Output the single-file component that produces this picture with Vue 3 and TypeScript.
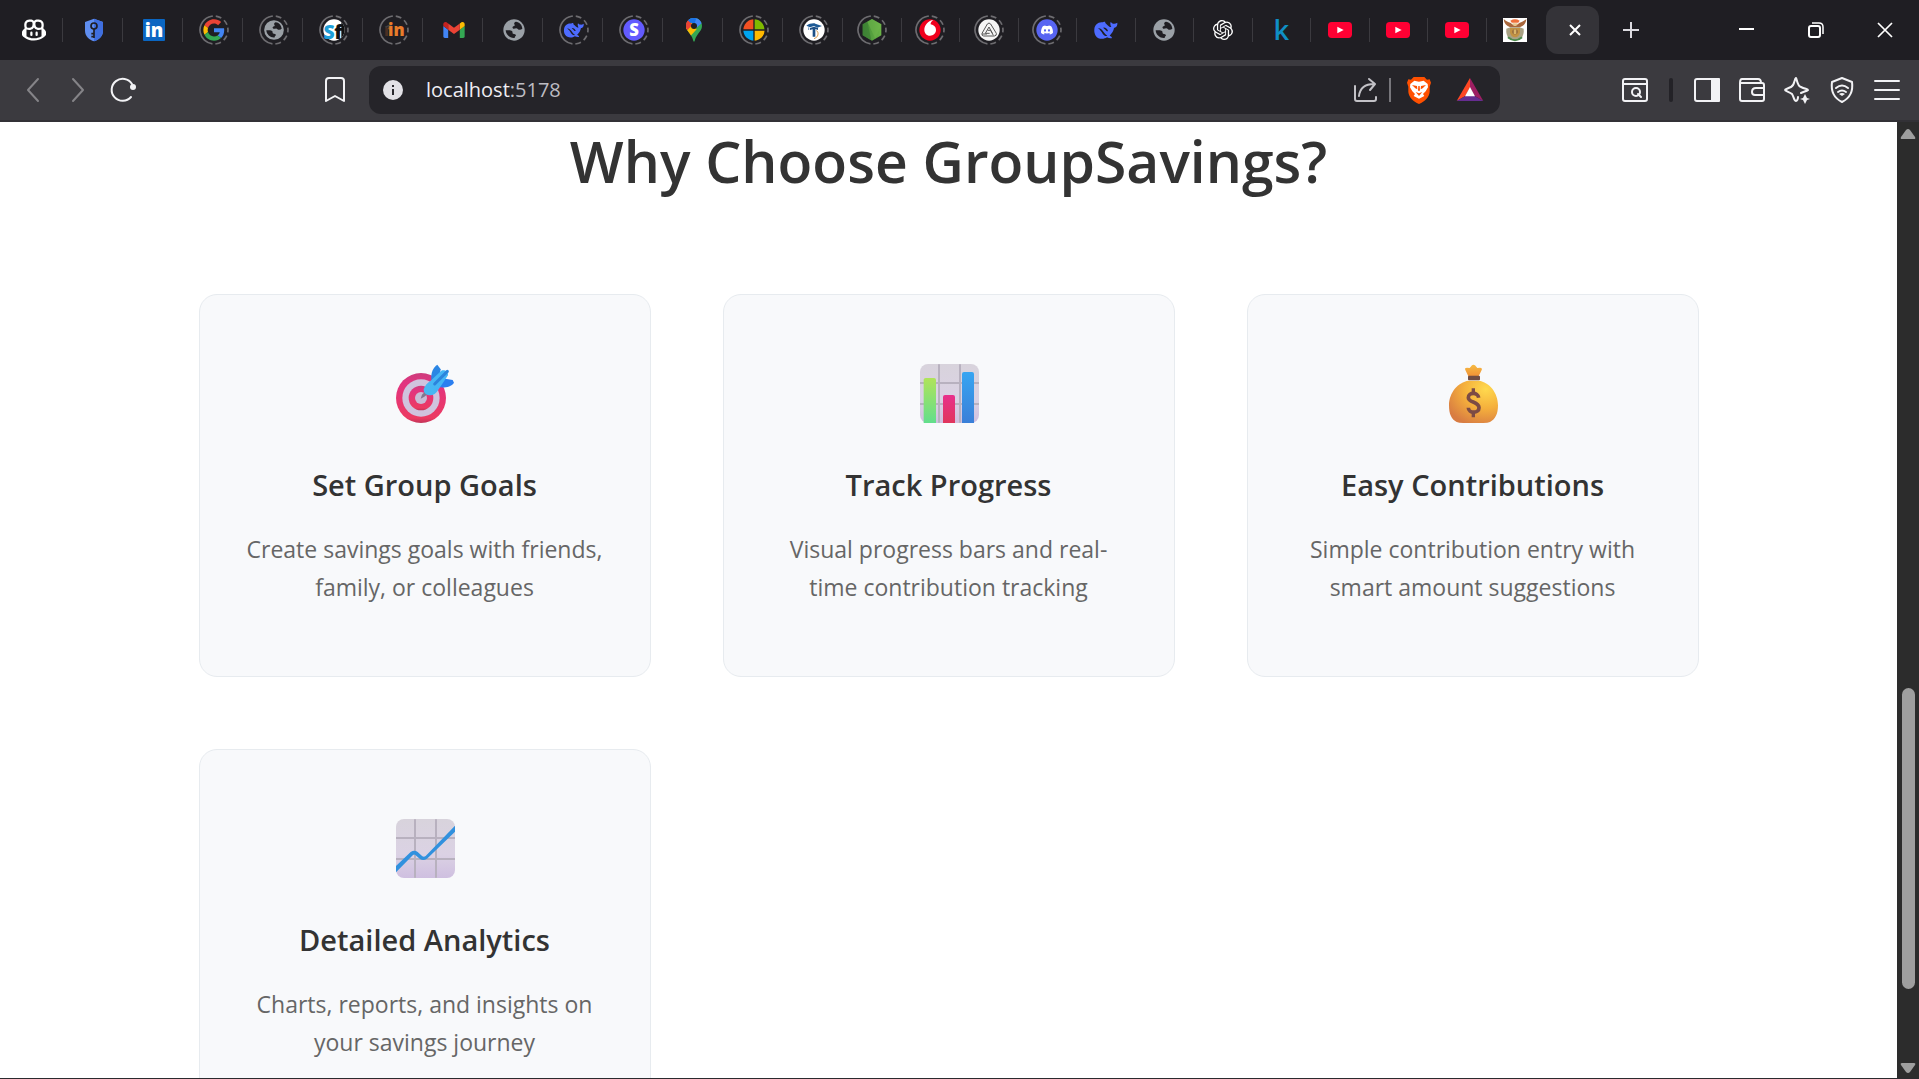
<script setup lang="ts">
interface Glyph {
  text: string
  x: number
  y: number
  size: number
  weight: number
  fill: string
}

interface Tab {
  label: string
  icon: string
  asleep?: boolean
  glyphs?: Glyph[]
}

interface Feature {
  icon: string
  title: string
  text: string
}

const wideTabs: Tab[] = [
  { label: 'Copilot', icon: 'copilot' },
  { label: 'Passwords', icon: 'shield' },
  { label: 'LinkedIn', icon: 'linkedin', glyphs: [{ text: 'in', x: 48, y: 69, size: 56, weight: 800, fill: '#fff' }] },
  { label: 'Google', icon: 'google', asleep: true },
  { label: 'Web page', icon: 'globe-small', asleep: true },
  {
    label: 'Student site',
    icon: 'sf',
    asleep: true,
    glyphs: [
      { text: 'S', x: 33, y: 76, size: 58, weight: 800, fill: '#1f9fd8' },
      { text: 'f', x: 61, y: 76, size: 60, weight: 800, fill: '#111' },
    ],
  },
  { label: 'Moodle', icon: 'moodle', asleep: true, glyphs: [{ text: 'in', x: 55, y: 66, size: 50, weight: 800, fill: '#e87c2a' }] },
  { label: 'Gmail', icon: 'gmail' },
  { label: 'Web page', icon: 'globe' },
  { label: 'DeepSeek', icon: 'whale-small', asleep: true },
  { label: 'Stripe', icon: 'stripe', asleep: true, glyphs: [{ text: 'S', x: 48, y: 66, size: 50, weight: 800, fill: '#fff' }] },
  { label: 'Maps', icon: 'maps' },
  { label: 'Microsoft', icon: 'microsoft', asleep: true },
  { label: 'Academy', icon: 'academy', asleep: true },
]

const narrowTabs: Tab[] = [
  { label: 'Node', icon: 'node', asleep: true },
  { label: 'Vodafone', icon: 'vodafone', asleep: true },
  { label: 'Triangle', icon: 'triangle', asleep: true },
  { label: 'Discord', icon: 'discord', asleep: true },
  { label: 'DeepSeek', icon: 'whale' },
  { label: 'Web page', icon: 'globe' },
  { label: 'ChatGPT', icon: 'openai' },
  { label: 'Kaggle', icon: 'blank', glyphs: [{ text: 'k', x: 49, y: 79, size: 82, weight: 600, fill: '#0f8fc4' }] },
  { label: 'YouTube', icon: 'youtube' },
  { label: 'YouTube', icon: 'youtube' },
  { label: 'YouTube', icon: 'youtube' },
  { label: 'Government', icon: 'arms' },
]

const tabGroups = [
  { name: 'wide', tabs: wideTabs },
  { name: 'narrow', tabs: narrowTabs },
]

const features: Feature[] = [
  { icon: 'target', title: 'Set Group Goals', text: 'Create savings goals with friends, family, or colleagues' },
  { icon: 'bars', title: 'Track Progress', text: 'Visual progress bars and real-time contribution tracking' },
  { icon: 'money', title: 'Easy Contributions', text: 'Simple contribution entry with smart amount suggestions' },
  { icon: 'growth', title: 'Detailed Analytics', text: 'Charts, reports, and insights on your savings journey' },
]
</script>

<template>
  <div class="browser">
    <svg class="sprite" aria-hidden="true">
      <defs>
        <clipPath id="disc"><circle cx="48" cy="48" r="32" /></clipPath>
        <clipPath id="pin-clip"><path d="M642 54C628 54 618 64 618 78C618 88 624 94 630 102C636 110 638 116 640 123Q642 128 644 123C646 116 648 110 654 102C660 94 666 88 666 78C666 64 656 54 642 54Z" /></clipPath>
        <linearGradient id="node-fill"><stop offset="0" stop-color="#3f8a35" /><stop offset="1" stop-color="#6cb548" /></linearGradient>
        <linearGradient id="tile" x1="0" y1="0" x2="0" y2="1"><stop offset="0" stop-color="#d8d3dc" /><stop offset=".6" stop-color="#dbd2e4" /><stop offset="1" stop-color="#cfbfe0" /></linearGradient>
        <linearGradient id="bar-green" x1="0" y1="0" x2="0" y2="1"><stop offset="0" stop-color="#b0e35a" /><stop offset="1" stop-color="#62de8c" /></linearGradient>
        <linearGradient id="bar-pink" x1="0" y1="0" x2="0" y2="1"><stop offset="0" stop-color="#e8308c" /><stop offset="1" stop-color="#e0355c" /></linearGradient>
        <linearGradient id="bar-blue" x1="0" y1="0" x2="0" y2="1"><stop offset="0" stop-color="#37a5f2" /><stop offset="1" stop-color="#3a7fd8" /></linearGradient>
        <linearGradient id="board" x1="0" y1="0" x2="0" y2="1"><stop offset="0" stop-color="#cc3d7c" /><stop offset=".2" stop-color="#e23480" /><stop offset=".9" stop-color="#ec3a62" /><stop offset="1" stop-color="#c03458" /></linearGradient>
        <linearGradient id="dart" x1="0" y1="0" x2="1" y2="0"><stop offset="0" stop-color="#49b8f2" /><stop offset="1" stop-color="#42b4f6" /></linearGradient>
        <radialGradient id="gold" cx=".75" cy=".2" r=".9"><stop offset="0" stop-color="#ffd94e" /><stop offset=".5" stop-color="#f5b03c" /><stop offset="1" stop-color="#d87c42" /></radialGradient>
        <linearGradient id="neck" x1="0" y1="0" x2="0" y2="1"><stop offset="0" stop-color="#f6bb42" /><stop offset="1" stop-color="#f09136" /></linearGradient>
      </defs>

      <symbol id="ring" viewBox="0 0 96 96">
        <circle cx="48" cy="48" r="42" fill="none" stroke="#6d6c70" stroke-width="5" pathLength="360" stroke-dasharray="20 14 22 14 24 12 168 12 24 14 22 14" transform="rotate(-10 48 48)" />
      </symbol>

      <symbol id="blank" viewBox="0 0 96 96"></symbol>

      <symbol id="copilot" viewBox="54 42 96 96">
        <g transform="translate(66 54) scale(4.5)" fill="#fff">
          <path d="M7.998 15.035c-4.562 0-7.873-2.914-7.998-3.749V9.338c.085-.628.677-1.686 1.588-2.065.013-.07.024-.143.036-.218.029-.183.06-.384.126-.612-.201-.508-.254-1.084-.254-1.656 0-.87.128-1.769.693-2.484.579-.733 1.494-1.124 2.724-1.261 1.206-.134 2.262.034 2.944.765.05.053.096.108.139.165.044-.057.094-.112.143-.165.682-.731 1.738-.899 2.944-.765 1.23.137 2.145.528 2.724 1.261.566.715.693 1.614.693 2.484 0 .572-.053 1.148-.254 1.656.066.228.098.429.126.612.012.076.024.148.037.218.924.385 1.522 1.471 1.591 2.095v1.872c0 .766-3.351 3.795-8.002 3.795Zm0-1.485c2.28 0 4.584-1.11 5.002-1.433V7.862l-.023-.116c-.49.21-1.075.291-1.727.291-1.146 0-2.059-.327-2.71-.991A3.222 3.222 0 0 1 8 6.303a3.24 3.24 0 0 1-.544.743c-.65.664-1.563.991-2.71.991-.652 0-1.236-.081-1.727-.291l-.023.116v4.255c.419.323 2.722 1.433 5.002 1.433ZM6.762 2.83c-.193-.206-.637-.413-1.682-.297-1.019.113-1.479.404-1.713.7-.247.312-.369.789-.369 1.554 0 .793.129 1.171.308 1.371.162.181.519.379 1.442.379.853 0 1.339-.235 1.638-.54.315-.322.527-.827.617-1.553.117-.935-.037-1.395-.241-1.614Zm4.155-.297c-1.044-.116-1.488.091-1.681.297-.204.219-.359.679-.242 1.614.091.726.303 1.231.618 1.553.299.305.784.54 1.638.54.922 0 1.28-.198 1.442-.379.179-.2.308-.578.308-1.371 0-.765-.123-1.242-.37-1.554-.233-.296-.693-.587-1.713-.7Z" />
          <path d="M6.25 9.037a.75.75 0 0 1 .75.75v1.501a.75.75 0 0 1-1.5 0V9.787a.75.75 0 0 1 .75-.75Zm4.25.75v1.501a.75.75 0 0 1-1.5 0V9.787a.75.75 0 0 1 1.5 0Z" />
        </g>
      </symbol>

      <symbol id="shield" viewBox="234 42 96 96">
        <path d="M282 56 309 66V92C309 108 297 119 282 124C267 119 255 108 255 92V66Z" fill="#5f8ef0" />
        <path d="M282 56 309 66V92C309 108 297 119 282 124Z" fill="#3f6fe0" />
        <circle cx="282" cy="78" r="9" fill="none" stroke="#1f1e23" stroke-width="5" />
        <path d="M282 87V114M282 101H274M282 110H274" fill="none" stroke="#1f1e23" stroke-width="5" />
      </symbol>

      <symbol id="linkedin" viewBox="414 42 96 96">
        <rect x="429" y="57" width="66" height="66" rx="3" fill="#0a66c2" />
      </symbol>

      <symbol id="google" viewBox="596 42 96 96">
        <g transform="translate(612 58) scale(1.333)">
          <path fill="#ea4335" d="M24 9.5c3.54 0 6.71 1.22 9.21 3.6l6.85-6.85C35.9 2.38 30.47 0 24 0 14.62 0 6.51 5.38 2.56 13.22l7.98 6.19C12.43 13.72 17.74 9.5 24 9.5z" />
          <path fill="#4285f4" d="M46.98 24.55c0-1.57-.15-3.09-.38-4.55H24v9.02h12.94c-.58 2.96-2.26 5.48-4.78 7.18l7.73 6c4.51-4.18 7.09-10.36 7.09-17.65z" />
          <path fill="#fbbc05" d="M10.53 28.59c-.48-1.45-.76-2.99-.76-4.59s.27-3.14.76-4.59l-7.98-6.19C.92 16.46 0 20.12 0 24c0 3.88.92 7.54 2.56 10.78l7.97-6.19z" />
          <path fill="#34a853" d="M24 48c6.48 0 11.93-2.13 15.89-5.81l-7.73-6c-2.15 1.45-4.92 2.3-8.16 2.3-6.26 0-11.57-4.22-13.47-9.91l-7.98 6.19C6.51 42.62 14.62 48 24 48z" />
        </g>
      </symbol>

      <symbol id="globe" viewBox="0 0 96 96">
        <circle cx="48" cy="48" r="32" fill="#9aa0a6" />
        <path d="M54 23C64 24 72 32 73 44C70 47 66 48 62 47C59 46 58 43 55 43C51 43 49 45 46 44C42 42 43 38 46 37C50 36 52 34 49 31C47 27 50 24 54 23Z" fill="#1f1e23" />
        <path d="M23 49C28 49 38 47 42 51C45 54 42 57 45 59C49 61 54 60 54 64C54 67 50 67 50 72C38 74 24 64 23 49Z" fill="#1f1e23" />
      </symbol>
      <symbol id="globe-small" viewBox="-4 -4 104 104"><use href="#globe" x="0" y="0" width="96" height="96" /></symbol>

      <symbol id="sf" viewBox="0 0 96 96">
        <g clip-path="url(#disc)">
          <rect width="96" height="96" fill="#fff" />
          <rect x="70" width="30" height="96" fill="#111" />
        </g>
      </symbol>

      <symbol id="moodle" viewBox="0 0 96 96">
        <path d="M20 38 36 31 44 34 24 42Z" fill="#45403f" />
        <path d="M22 42H30V66H22Z" fill="#4a3024" />
        <path d="M30 40H38V46H30Z" fill="#70422a" />
      </symbol>

      <symbol id="gmail" viewBox="1314 42 96 96">
        <g transform="translate(1330 66) scale(.727) translate(-52 -42)">
          <path fill="#4285f4" d="M58 108h14V74L52 59v43c0 3.32 2.69 6 6 6" />
          <path fill="#34a853" d="M120 108h14c3.32 0 6-2.69 6-6V59l-20 15" />
          <path fill="#fbbc04" d="M120 48v26l20-15v-8c0-7.42-8.47-11.65-14.4-7.2" />
          <path fill="#ea4335" d="M72 74V48l24 18 24-18v26L96 92" />
          <path fill="#c5221f" d="M52 51v8l20 15V48l-5.6-4.2c-5.94-4.45-14.4-.22-14.4 7.2" />
        </g>
      </symbol>

      <symbol id="whale" viewBox="388 42 96 96">
        <path fill="#4d6bfe" d="M401 88C402 75 412 66 424 67C429 67 430 64 434 66C432 69 436 71 440 75C444 79 448 82 452 81C449 76 448 70 450 66C453 68 454 71 458 71C462 72 466 70 470 68C471 76 468 82 460 84C459 92 454 100 447 107C451 109 454 111 454 114C450 116 444 114 439 112C429 119 412 118 405 107C402 102 400 95 401 88Z" />
        <path fill="#1f1e23" d="M412 85C419 84 424 89 429 96C433 102 436 105 440 107C436 110 430 106 426 101C422 95 418 89 412 85Z" />
        <path fill="#1f1e23" d="M428 83C434 82 440 87 442 93C440 95 436 92 434 89C432 87 430 86 428 83Z" />
      </symbol>
      <symbol id="whale-small" viewBox="-8 -8 112 112"><use href="#whale" x="0" y="0" width="96" height="96" /></symbol>

      <symbol id="stripe" viewBox="0 0 96 96">
        <circle cx="48" cy="48" r="32" fill="#635bff" />
      </symbol>

      <symbol id="maps" viewBox="594 42 96 96">
        <g clip-path="url(#pin-clip)">
          <rect x="610" y="50" width="64" height="84" fill="#34a853" />
          <path d="M610 50H674V62L642 90 624 66Z" fill="#4285f4" />
          <path d="M610 50 626 58 646 78 630 88 618 90 610 84Z" fill="#ea4335" />
          <path d="M626 50H650L642 78 624 62Z" fill="#1a73e8" />
          <path d="M614 90 634 68 650 88 628 112Z" fill="#fbbc04" />
          <path d="M610 60 624 62 638 74 620 92H610Z" fill="#ea4335" />
        </g>
        <circle cx="642" cy="78" r="9" fill="#1f1e23" />
      </symbol>

      <symbol id="microsoft" viewBox="0 0 96 96">
        <g clip-path="url(#disc)">
          <path d="M0 0H46V46H0Z" fill="#f25022" /><path d="M50 0H96V46H50Z" fill="#7fba00" />
          <path d="M0 50H46V96H0Z" fill="#00a4ef" /><path d="M50 50H96V96H50Z" fill="#ffb900" />
        </g>
      </symbol>

      <symbol id="academy" viewBox="0 0 96 96">
        <circle cx="48" cy="48" r="32" fill="#fff" />
        <path d="M25 35C34 28 48 27 52 29L72 36 58 41 48 36 36 40Z" fill="#1d5a96" />
        <path d="M36 42 48 38 60 42V48L52 45V68H44V46L36 48Z" fill="#1d4f86" />
        <path d="M55 50C62 52 62 66 54 71L48 74" fill="none" stroke="#d99a4e" stroke-width="3" />
        <path d="M32 40V48" stroke="#1d5a96" stroke-width="2" />
      </symbol>

      <symbol id="node" viewBox="0 0 96 96">
        <path d="M48 15 76 31V64L48 80 20 64V31Z" fill="url(#node-fill)" />
        <path d="M20 31 34 23 46 79 20 64Z" fill="#3a7c33" opacity=".6" />
        <path d="M34 23 48 15 76 31 58 74Z" fill="#6fb84c" opacity=".5" />
      </symbol>

      <symbol id="vodafone" viewBox="0 0 96 96">
        <circle cx="48" cy="48" r="32" fill="#f0001c" />
        <path d="M58 18C52 22 49 27 50 31C60 33 66 39 66 48C66 58 58 65 48 65C37 65 31 57 31 47C31 33 44 19 58 18Z" fill="#fff" />
      </symbol>

      <symbol id="triangle" viewBox="0 0 96 96">
        <circle cx="48" cy="48" r="32" fill="#f5f5f5" />
        <path d="M43 30Q48 24 53 30L70 58Q72 65 64 66H32Q25 65 27 58ZM48 39 37 58H50M48 39 58 58M44 49H53L61 64M27 60H42" fill="none" stroke="#565656" stroke-width="3" />
      </symbol>

      <symbol id="discord" viewBox="0 0 96 96">
        <circle cx="48" cy="48" r="32" fill="#5865f2" />
        <path transform="translate(30 30) scale(1.5)" fill="#fff" d="M20.317 4.3698a19.7913 19.7913 0 00-4.8851-1.5152.0741.0741 0 00-.0785.0371c-.211.3753-.4447.8648-.6083 1.2495-1.8447-.2762-3.68-.2762-5.4868 0-.1636-.3933-.4058-.8742-.6177-1.2495a.077.077 0 00-.0785-.037 19.7363 19.7363 0 00-4.8852 1.515.0699.0699 0 00-.0321.0277C.5334 9.0458-.319 13.5799.0992 18.0578a.0824.0824 0 00.0312.0561c2.0528 1.5076 4.0413 2.4228 5.9929 3.0294a.0777.0777 0 00.0842-.0276c.4616-.6304.8731-1.2952 1.226-1.9942a.076.076 0 00-.0416-.1057c-.6528-.2476-1.2743-.5495-1.8722-.8923a.077.077 0 01-.0076-.1277c.1258-.0943.2517-.1923.3718-.2914a.0743.0743 0 01.0776-.0105c3.9278 1.7933 8.18 1.7933 12.0614 0a.0739.0739 0 01.0785.0095c.1202.099.246.1981.3728.2924a.077.077 0 01-.0066.1276 12.2986 12.2986 0 01-1.873.8914.0766.0766 0 00-.0407.1067c.3604.698.7719 1.3628 1.225 1.9932a.076.076 0 00.0842.0286c1.961-.6067 3.9495-1.5219 6.0023-3.0294a.077.077 0 00.0313-.0552c.5004-5.177-.8382-9.6739-3.5485-13.6604a.061.061 0 00-.0312-.0286zM8.02 15.3312c-1.1825 0-2.1569-1.0857-2.1569-2.419 0-1.3332.9555-2.4189 2.157-2.4189 1.2108 0 2.1757 1.0952 2.1568 2.419 0 1.3332-.9555 2.4189-2.1569 2.4189zm7.9748 0c-1.1825 0-2.1569-1.0857-2.1569-2.419 0-1.3332.9554-2.4189 2.1569-2.4189 1.2108 0 2.1757 1.0952 2.1568 2.419 0 1.3332-.946 2.4189-2.1568 2.4189Z" />
      </symbol>

      <symbol id="openai" viewBox="0 0 96 96">
        <path transform="translate(18 18) scale(2.5)" fill="#fff" d="M22.2819 9.8211a5.9847 5.9847 0 0 0-.5157-4.9108 6.0462 6.0462 0 0 0-6.5098-2.9A6.0651 6.0651 0 0 0 4.9807 4.1818a5.9847 5.9847 0 0 0-3.9977 2.9 6.0462 6.0462 0 0 0 .7427 7.0966 5.98 5.98 0 0 0 .511 4.9107 6.051 6.051 0 0 0 6.5146 2.9001A5.9847 5.9847 0 0 0 13.2599 24a6.0557 6.0557 0 0 0 5.7718-4.2058 5.9894 5.9894 0 0 0 3.9977-2.9001 6.0557 6.0557 0 0 0-.7475-7.0729zm-9.022 12.6081a4.4755 4.4755 0 0 1-2.8764-1.0408l.1419-.0804 4.7783-2.7582a.7948.7948 0 0 0 .3927-.6813v-6.7369l2.02 1.1686a.071.071 0 0 1 .038.052v5.5826a4.504 4.504 0 0 1-4.4945 4.4944zm-9.6607-4.1254a4.4708 4.4708 0 0 1-.5346-3.0137l.142.0852 4.783 2.7582a.7712.7712 0 0 0 .7806 0l5.8428-3.3685v2.3324a.0804.0804 0 0 1-.0332.0615L9.74 19.9502a4.4992 4.4992 0 0 1-6.1408-1.6464zM2.3408 7.8956a4.485 4.485 0 0 1 2.3655-1.9728V11.6a.7664.7664 0 0 0 .3879.6765l5.8144 3.3543-2.0201 1.1685a.0757.0757 0 0 1-.071 0l-4.8303-2.7865A4.504 4.504 0 0 1 2.3408 7.872zm16.5963 3.8558L13.1038 8.364 15.1192 7.2a.0757.0757 0 0 1 .071 0l4.8303 2.7913a4.4944 4.4944 0 0 1-.6765 8.1042v-5.6772a.79.79 0 0 0-.407-.667zm2.0107-3.0231l-.142-.0852-4.7735-2.7818a.7759.7759 0 0 0-.7854 0L9.409 9.2297V6.8974a.0662.0662 0 0 1 .0284-.0615l4.8303-2.7866a4.4992 4.4992 0 0 1 6.6802 4.66zM8.3065 12.863l-2.02-1.1638a.0804.0804 0 0 1-.038-.0567V6.0742a4.4992 4.4992 0 0 1 7.3757-3.4537l-.142.0805L8.704 5.459a.7948.7948 0 0 0-.3927.6813zm1.0976-2.3654l2.602-1.4998 2.6069 1.4998v2.9994l-2.5974 1.4997-2.6067-1.4997Z" />
      </symbol>

      <symbol id="youtube" viewBox="0 0 96 96">
        <rect x="12" y="24" width="72" height="48" rx="11" fill="#ff0033" />
        <path d="M40 38 59 48 40 58Z" fill="#fff" />
      </symbol>

      <symbol id="arms" viewBox="0 0 96 96">
        <rect x="12" y="12" width="72" height="72" fill="#fff" />
        <path d="M14 15C15 28 22 36 34 40L62 40C74 36 81 28 82 15C75 22 68 25 62 26L54 32H42L34 26C28 25 21 22 14 15Z" fill="#a9673c" />
        <path d="M34 20Q48 12 62 20L58 26H38Z" fill="#f0703a" />
        <path d="M40 28H56L52 36H44Z" fill="#e8c58a" />
        <path d="M22 44Q20 62 30 74Q48 84 66 74Q76 62 74 44L62 40H34Z" fill="#a9a184" />
        <path d="M33 42H63V56Q60 68 48 70Q36 68 33 56Z" fill="#c29243" />
        <circle cx="48" cy="53" r="8" fill="#8a6038" />
        <path d="M44 46H52V60H44Z" fill="#d9b56a" />
        <path d="M27 70Q48 88 69 70" fill="none" stroke="#4d8a4c" stroke-width="6" />
      </symbol>

      <symbol id="target" viewBox="45 42 180 180">
        <circle cx="123" cy="144" r="75" fill="url(#board)" />
        <circle cx="123" cy="144" r="56" fill="#d0c3de" />
        <circle cx="123" cy="144" r="37" fill="url(#board)" />
        <circle cx="123" cy="144" r="18" fill="#c9bcd6" />
        <path d="M122 146 126 134 136 124 143 132 133 140Z" fill="#83768e" />
        <path d="M154 88C152 68 160 52 172 44L182 58 178 80 160 94Z" fill="#2b86e4" />
        <path d="M174 108 196 86 218 90 222 98C214 110 196 114 178 112Z" fill="#2b7ff0" />
        <path d="M131 118C134 108 142 98 152 92L184 62C192 58 206 64 204 76L176 118C168 132 158 137 148 136C136 134 131 128 131 118Z" fill="url(#dart)" />
        <path d="M164 102 202 64" stroke="#2b84dc" stroke-width="9" stroke-linecap="round" />
      </symbol>

      <symbol id="bars" viewBox="57 42 180 180">
        <rect x="60" y="42" width="177" height="177" rx="24" fill="url(#tile)" />
        <path d="M117 43V218M180 43V218M60 99H237M60 162H237" stroke="#b8b1bf" stroke-width="6" />
        <path d="M71 219V89Q71 84 77 84H102Q108 84 108 89V219Z" fill="url(#bar-green)" />
        <path d="M129 219V140Q129 135 135 135H159Q165 135 165 140V219Z" fill="url(#bar-pink)" />
        <path d="M186 219V71Q186 66 192 66H216Q222 66 222 71V219Z" fill="url(#bar-blue)" />
      </symbol>

      <symbol id="money" viewBox="39 42 180 180">
        <path d="M115 79 106 60Q103 53 111 53L119 54 126 46Q130 43 135 46L142 54 150 53Q158 54 155 60L146 79Z" fill="url(#neck)" />
        <path d="M116 92H146C178 96 204 128 204 166C204 192 196 208 180 216Q174 219 160 219H100Q86 219 80 216C64 208 57 192 57 166C57 128 84 96 116 92Z" fill="url(#gold)" />
        <rect x="114" y="77" width="36" height="14" rx="3" fill="#714d42" />
        <path d="M130 115V128M130 188V202" stroke="#7c4b45" stroke-width="10" />
        <path d="M146 143C144 126 115 126 115 143C115 158 147 154 147 173C147 192 115 190 115 173" fill="none" stroke="#7c4b45" stroke-width="11" />
      </symbol>

      <symbol id="growth" viewBox="45 57 180 180">
        <rect x="48" y="57" width="177" height="177" rx="24" fill="url(#tile)" />
        <path d="M105 58V233M168 58V233M48 114H225M48 177H225" stroke="#b8b1bf" stroke-width="6" />
        <path d="M48 198 92 156Q103 148 113 156L127 169Q132 172 137 168L225 77V95L141 176Q130 184 120 177L106 165Q103 162 99 165L48 217Z" fill="#3191de" />
      </symbol>
    </svg>

    <header class="tab-bar">
      <div v-for="group in tabGroups" :key="group.name" :class="['tab-group', group.name]">
        <button v-for="(tab, i) in group.tabs" :key="i" class="tab" type="button" :aria-label="tab.label">
          <svg class="favicon" viewBox="0 0 96 96">
            <use :href="'#' + tab.icon" />
            <text
              v-for="glyph in tab.glyphs"
              :key="glyph.text"
              :x="glyph.x"
              :y="glyph.y"
              :font-size="glyph.size"
              :font-weight="glyph.weight"
              :fill="glyph.fill"
              text-anchor="middle"
            >{{ glyph.text }}</text>
            <use v-if="tab.asleep" href="#ring" />
          </svg>
        </button>
      </div>
      <button class="active-tab" type="button" aria-label="Close tab">
        <svg width="14" height="14" viewBox="0 0 14 14"><path d="M2 2 12 12M12 2 2 12" stroke="#fff" stroke-width="2" /></svg>
      </button>
      <button class="new-tab" type="button" aria-label="New tab">
        <svg width="16" height="16" viewBox="0 0 16 16"><path d="M8 0V16M0 8H16" stroke="#dcdbe0" stroke-width="2" /></svg>
      </button>
      <div class="window-controls">
        <button type="button" aria-label="Minimize">
          <svg width="16" height="16" viewBox="0 0 16 16"><path d="M0 7H15" stroke="#fff" stroke-width="2" /></svg>
        </button>
        <button type="button" aria-label="Restore">
          <svg width="16" height="16" viewBox="0 0 16 16" fill="none" stroke="#fff" stroke-width="2"><rect x="1" y="4" width="11" height="11" rx="2" /><path d="M4 1H11Q15 1 15 5V12" stroke-width="1.5" /></svg>
        </button>
        <button type="button" aria-label="Close">
          <svg width="16" height="16" viewBox="0 0 16 16"><path d="M1 1 15 15M15 1 1 15" stroke="#fff" stroke-width="1.7" /></svg>
        </button>
      </div>
    </header>

    <nav class="toolbar">
      <button class="tool" type="button" aria-label="Back">
        <svg viewBox="0 0 30 30"><path d="M20 4 10 15 20 26" stroke="#858488" /></svg>
      </button>
      <button class="tool" type="button" aria-label="Forward">
        <svg viewBox="0 0 30 30"><path d="M10 4 20 15 10 26" stroke="#858488" /></svg>
      </button>
      <button class="tool" type="button" aria-label="Reload">
        <svg viewBox="0 0 30 30"><path d="M23 22A11 11 0 1 1 24 9" /><circle cx="25" cy="12" r="3" fill="#f2f2f5" stroke="none" /></svg>
      </button>
      <button class="tool bookmark" type="button" aria-label="Bookmark">
        <svg viewBox="0 0 30 30"><path d="M6 26V6Q6 3 9 3H21Q24 3 24 6V26L15 21Z" /></svg>
      </button>
      <div class="address">
        <svg class="info" viewBox="0 0 20 20"><circle cx="10" cy="10" r="10" fill="#e2e1e6" /><path d="M10 9V15M10 5V7" stroke="#2a292e" stroke-width="2" /></svg>
        <div class="url"><span class="host">localhost</span>:5178</div>
        <button class="share" type="button" aria-label="Share">
          <svg viewBox="0 0 30 30"><path d="M5 11V24Q5 26 7 26H24Q26 26 26 24V22M9 21C10 13 15 9 24 9M19 4 25 9 20 15" stroke="#c3c2c7" /></svg>
        </button>
        <span class="divider"></span>
        <button class="brave" type="button" aria-label="Shields">
          <svg viewBox="1334 226 84 84">
            <path d="M1360 229H1392L1400 237 1408 236 1412 246 1408 258V274C1406 290 1394 302 1376 310C1358 302 1346 290 1344 274V258L1340 246 1344 236 1352 237Z" fill="#ff5000" />
            <path d="M1362 240 1376 243 1390 240 1402 250 1403 260 1396 272 1388 280 1392 286 1376 294 1360 286 1364 280 1356 272 1349 260 1350 250Z" fill="#fff" />
            <path d="M1355 253 1370 256 1371 266 1365 263ZM1397 253 1382 256 1381 266 1387 263ZM1366 274 1376 278 1386 274 1376 286ZM1374 256H1378L1379 270H1373Z" fill="#ff5000" />
          </svg>
        </button>
        <button class="rewards" type="button" aria-label="Rewards">
          <svg viewBox="48 228 84 84">
            <path d="M90 234V262L76 288 50 303Z" fill="#ff4724" /><path d="M90 234 130 303 104 288 90 262Z" fill="#9e1f63" /><path d="M50 303 76 288H104L130 303Z" fill="#662d91" /><path d="M90 261 105 289H75Z" fill="#fff" />
          </svg>
        </button>
      </div>
      <button class="tool" type="button" aria-label="Search tabs">
        <svg viewBox="0 0 30 30"><rect x="3" y="4" width="24" height="22" rx="2" /><path d="M3 9H27M18 19 21 22" /><circle cx="16" cy="17" r="4" /></svg>
      </button>
      <span class="separator"></span>
      <button class="tool" type="button" aria-label="Sidebar">
        <svg viewBox="0 0 30 30"><rect x="3" y="4" width="24" height="22" rx="2" /><path d="M20 4H27V26H20Z" fill="#f2f2f5" /></svg>
      </button>
      <button class="tool" type="button" aria-label="Wallet">
        <svg viewBox="0 0 30 30"><path d="M3 8V24Q3 26 5 26H25Q27 26 27 24V10Q27 8 25 8H3Q3 4 5 4H21Q24 4 24 8M27 13H19Q15 13 15 17Q15 20 18 20H27" /></svg>
      </button>
      <button class="tool" type="button" aria-label="Assistant">
        <svg viewBox="0 0 30 30"><path d="M14 3C15 4 15 11 19 12C23 14 26 14 26 15C25 16 21 17 19 18M14 3C12 4 13 10 9 12C5 14 3 14 3 15C3 16 8 17 10 19C12 22 12 26 14 26C15 26 16 24 16 22" /><path d="M23 19 25 23 28 24 25 25 23 29 21 25 18 24 21 23Z" fill="#f2f2f5" stroke="none" /></svg>
      </button>
      <button class="tool" type="button" aria-label="VPN">
        <svg viewBox="0 0 30 30"><path d="M15 3 25 7Q27 21 15 27Q3 21 5 7ZM9 13Q15 8 21 13M11 17Q15 14 19 17" /><path d="M12 19Q15 17 18 19L15 21Z" fill="#f2f2f5" stroke="none" /></svg>
      </button>
      <button class="tool" type="button" aria-label="Menu">
        <svg viewBox="0 0 30 30"><path d="M3 6H27M3 15H27M3 24H27" /></svg>
      </button>
    </nav>

    <div class="viewport">
      <main class="page">
        <h2>Why Choose GroupSavings?</h2>
        <div class="features">
          <article v-for="feature in features" :key="feature.title" class="card">
            <svg class="emoji" aria-hidden="true"><use :href="'#' + feature.icon" /></svg>
            <h3>{{ feature.title }}</h3>
            <p>{{ feature.text }}</p>
          </article>
        </div>
      </main>
      <div class="scrollbar" aria-hidden="true">
        <svg class="arrow" viewBox="0 0 22 24"><path d="M4 15 9 8Q11 6 13 8L18 15Q19 17 17 17H5Q3 17 4 15Z" fill="#9f9f9f" /></svg>
        <span class="above"></span>
        <span class="thumb"></span>
        <span class="below"></span>
        <svg class="arrow" viewBox="0 0 22 24"><path d="M4 11 9 18Q11 20 13 18L18 11Q19 9 17 9H5Q3 9 4 11Z" fill="#9f9f9f" /></svg>
      </div>
    </div>
  </div>
</template>

<style>
body {
  margin: 0;
}
</style>

<style scoped>
.browser {
  display: flex;
  flex-direction: column;
  height: 100vh;
  box-sizing: border-box;
  border-bottom: 1px solid #2b2a2e;
  overflow: hidden;
  background: #fff;
  font-family: "Open Sans", "Noto Sans", sans-serif;
}

.sprite {
  position: absolute;
  width: 0;
  height: 0;
}

button {
  display: flex;
  align-items: center;
  justify-content: center;
  padding: 0;
  border: 0;
  background: none;
  flex: none;
  font-family: inherit;
}

.tab-bar {
  display: flex;
  align-items: center;
  flex: none;
  height: 60px;
  padding-left: 3px;
  background: #1f1e23;
}

.tab-group {
  display: flex;
}

.tab-group.wide {
  flex: 0 1 840px;
}

.tab-group.narrow {
  flex: 0 1 702px;
}

.tab {
  flex: 1;
  min-width: 0;
  height: 24px;
  border-right: 1px solid #3b3a3f;
}

.wide .tab {
  padding-left: 3px;
}

.narrow .tab:last-child {
  border-right-color: transparent;
}

.favicon {
  flex: none;
  width: 32px;
  height: 32px;
}

.active-tab {
  width: 53px;
  height: 48px;
  margin: 0 2px 0 1px;
  padding-left: 4px;
  border-radius: 12px;
  background: #343338;
}

.new-tab {
  width: 60px;
  height: 48px;
}

.window-controls {
  display: flex;
  margin-left: auto;
}

.window-controls button {
  width: 69px;
  height: 60px;
}

.toolbar {
  display: flex;
  align-items: center;
  flex: none;
  height: 60px;
  padding: 0 10px;
  border-bottom: 2px solid #323136;
  background: #3b3a3f;
}

.tool {
  width: 45px;
  height: 45px;
}

.tool svg,
.share svg {
  width: 30px;
  height: 30px;
  fill: none;
  stroke: #f2f2f5;
  stroke-width: 2;
  stroke-linecap: round;
  stroke-linejoin: round;
}

.bookmark {
  margin: 0 12px 0 167px;
}

.address {
  display: flex;
  align-items: center;
  flex: 1;
  min-width: 0;
  height: 48px;
  margin-right: 112px;
  padding: 0 16px 0 14px;
  box-sizing: border-box;
  border-radius: 12px;
  background: #252429;
}

.info {
  flex: none;
  width: 20px;
  height: 20px;
}

.url {
  flex: 1;
  margin-left: 23px;
  color: #bdbcc2;
  font-size: 20px;
  line-height: 28px;
}

.host {
  color: #efeef3;
}

.divider {
  width: 2px;
  height: 24px;
  margin: 0 14px 0 9px;
  background: #77767b;
}

.brave,
.rewards {
  width: 28px;
  height: 28px;
}

.rewards {
  margin-left: 23px;
}

.brave svg,
.rewards svg {
  width: 28px;
  height: 28px;
}

.separator {
  width: 4px;
  height: 24px;
  margin: 0 11px 0 12px;
  border-radius: 2px;
  background: #232227;
}

.viewport {
  display: flex;
  flex: 1;
  min-height: 0;
}

.page {
  flex: 1;
  min-width: 0;
  overflow: hidden;
}

h2 {
  margin: 0 0 94px;
  color: #333;
  font-size: 57px;
  font-weight: 600;
  line-height: 78px;
  text-align: center;
}

.features {
  display: grid;
  grid-template-columns: repeat(3, 1fr);
  gap: 72px;
  max-width: 1500px;
  margin: 0 auto;
}

.card {
  padding: 69px 45px 70px;
  border: 1px solid #e7ebef;
  border-radius: 18px;
  background: #f8f9fb;
  text-align: center;
}

.emoji {
  display: block;
  width: 60px;
  height: 60px;
  margin: 0 auto 41px;
}

h3 {
  margin: 0 0 25px;
  color: #333;
  font-size: 29px;
  font-weight: 600;
  line-height: 40px;
}

p {
  margin: 0;
  color: #666;
  font-size: 23px;
  line-height: 38px;
}

.scrollbar {
  display: flex;
  flex-direction: column;
  align-items: center;
  width: 22px;
  background: #2c2c2c;
}

.arrow {
  width: 22px;
  height: 24px;
}

.above {
  flex: 542;
}

.thumb {
  flex: 301;
  width: 13px;
  border-radius: 7px;
  background: #9f9f9f;
}

.below {
  flex: 65;
}
</style>
